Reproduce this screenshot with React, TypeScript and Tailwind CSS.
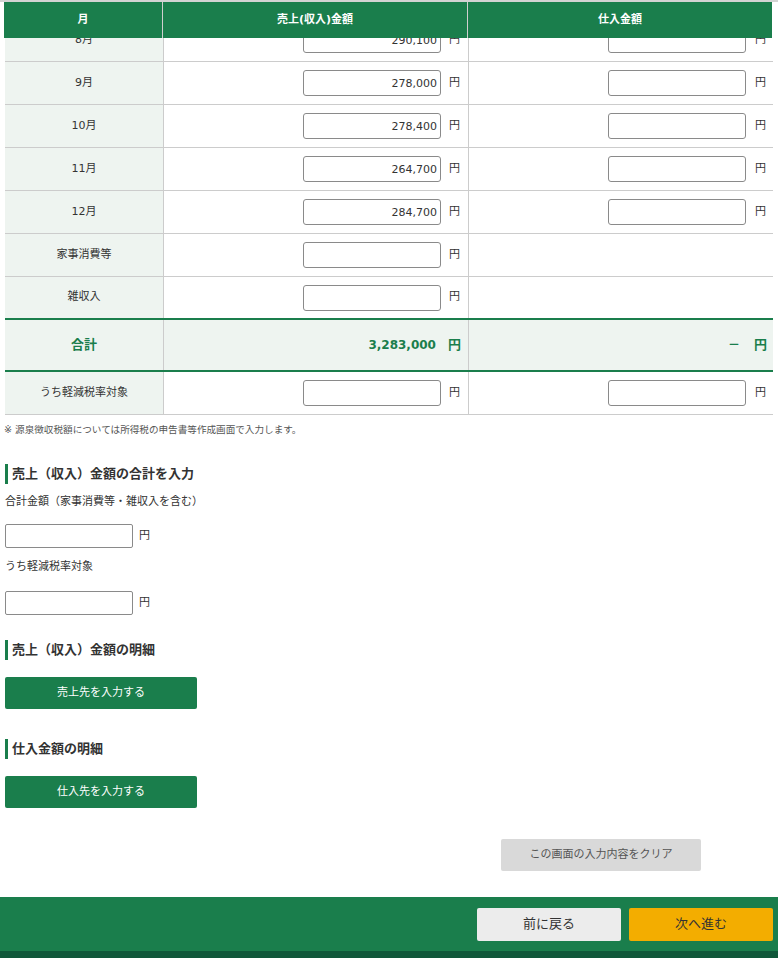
import React from "react";

const GREEN = "bg-[#1a7e4c]";

function Yen({ bold = false }: { bold?: boolean }) {
  return <span className={bold ? "text-[13px] font-bold" : "text-[11px] text-[#333]"}>円</span>;
}

function AmountInput({ value = "" }: { value?: string }) {
  return (
    <input
      type="text"
      defaultValue={value}
      className="w-[138px] h-[26px] border border-[#8a8a8a] rounded-[3px] bg-white text-right pr-[3px] text-[11px] text-[#333] outline-none"
    />
  );
}

function Row({
  label,
  v1,
  col3 = true,
  last = false,
}: {
  label: string;
  v1?: string;
  col3?: boolean;
  last?: boolean;
}) {
  const b = last ? "h-[41px]" : "h-[43px] border-b border-[#cccccc]";
  return (
    <div className="grid grid-cols-[159px_305px_304px]">
      <div className={`${b} border-r border-r-[#cccccc] bg-[#eef4f0] flex items-center justify-center text-[11px] text-[#333]`}>
        {label}
      </div>
      <div className={`${b} border-r border-r-[#cccccc] flex items-center justify-end pr-[8px] gap-[8px]`}>
        <AmountInput value={v1} />
        <Yen />
      </div>
      <div className={`${b} flex items-center justify-end pr-[7px] gap-[9px]`}>
        {col3 && (
          <>
            <AmountInput />
            <Yen />
          </>
        )}
      </div>
    </div>
  );
}

function Heading({ children }: { children: React.ReactNode }) {
  return (
    <div className="h-[20px] border-l-[3px] border-[#1a7e4c] pl-[4px] flex items-center text-[13px] font-bold text-[#333] leading-[20px]">
      {children}
    </div>
  );
}

export default function App() {
  return (
    <div className="w-[778px] h-[958px] overflow-hidden bg-white font-[family-name:DejaVu_Sans,Noto_Sans_CJK_JP,sans-serif] text-[#333]">
      {/* sticky header */}
      <div className="sticky top-0 z-10 bg-white">
        <div className="h-[2px] bg-[#d3d3d3]" />
        <div className={`ml-[4px] w-[768px] h-[36px] ${GREEN} grid grid-cols-[159px_305px_304px] text-white text-[11px] font-bold`}>
          <div className="flex items-center justify-center border-r border-[#cfcfcf]">月</div>
          <div className="flex items-center justify-center border-r border-[#cfcfcf]">売上(収入)金額</div>
          <div className="flex items-center justify-center">仕入金額</div>
        </div>
      </div>

      {/* table body */}
      <div className="ml-[5px] w-[768px] -mt-[19px]">
        <Row label="8月" v1="290,100" />
        <Row label="9月" v1="278,000" />
        <Row label="10月" v1="278,400" />
        <Row label="11月" v1="264,700" />
        <Row label="12月" v1="284,700" />
        <Row label="家事消費等" col3={false} />
        <Row label="雑収入" col3={false} last />
        <div className="grid grid-cols-[159px_305px_304px] border-y-2 border-[#1a7e4c] bg-[#eef4f0] text-[#1a7e4c] font-bold">
          <div className="h-[50px] border-r border-[#cccccc] flex items-center justify-center text-[13px]">合計</div>
          <div className="h-[50px] border-r border-[#cccccc] flex items-center justify-end pr-[7px] gap-[12px]">
            <span className="text-[12px]">3,283,000</span>
            <Yen bold />
          </div>
          <div className="h-[50px] flex items-center justify-end pr-[6px] gap-[14px]">
            <span className="text-[12px]">－</span>
            <Yen bold />
          </div>
        </div>
        <Row label="うち軽減税率対象" />
      </div>

      {/* lower section */}
      <div className="pl-[5px]">
        <p className="mt-[8px] -ml-px text-[9.6px] leading-[14px] text-[#555]">
          ※ 源泉徴収税額については所得税の申告書等作成画面で入力します。
        </p>

        <div className="mt-[27px]">
          <Heading>売上（収入）金額の合計を入力</Heading>
        </div>
        <p className="mt-[10px] text-[11px] leading-[16px] text-[#333]">合計金額（家事消費等・雑収入を含む）</p>
        <div className="mt-[14px] flex items-center gap-[6px]">
          <input type="text" className="w-[128px] h-[24px] border border-[#8a8a8a] rounded-[2px] outline-none" />
          <Yen />
        </div>
        <p className="mt-[11px] text-[11px] leading-[16px] text-[#333]">うち軽減税率対象</p>
        <div className="mt-[16px] flex items-center gap-[6px]">
          <input type="text" className="w-[128px] h-[24px] border border-[#8a8a8a] rounded-[2px] outline-none" />
          <Yen />
        </div>

        <div className="mt-[25px]">
          <Heading>売上（収入）金額の明細</Heading>
        </div>
        <button className={`mt-[17px] block w-[192px] h-[32px] ${GREEN} rounded-[2px] text-white text-[11px]`}>
          売上先を入力する
        </button>

        <div className="mt-[30px]">
          <Heading>仕入金額の明細</Heading>
        </div>
        <button className={`mt-[17px] block w-[192px] h-[32px] ${GREEN} rounded-[2px] text-white text-[11px]`}>
          仕入先を入力する
        </button>

        <div className="mt-[31px] flex justify-end pr-[77px]">
          <button className="w-[200px] h-[32px] bg-[#d9d9d9] rounded-[2px] text-[11px] text-[#555]">
            この画面の入力内容をクリア
          </button>
        </div>
      </div>

      {/* footer */}
      <div className={`mt-[26px] h-[54px] ${GREEN} flex items-center justify-end gap-[8px] pr-[5px]`}>
        <button className="w-[144px] h-[33px] bg-[#ececec] rounded-[2px] text-[13px] text-[#333]">前に戻る</button>
        <button className="w-[144px] h-[33px] bg-[#f3ad00] rounded-[2px] text-[13px] text-[#333]">次へ進む</button>
      </div>
      <div className="h-[7px] bg-[#10573a]" />
    </div>
  );
}
